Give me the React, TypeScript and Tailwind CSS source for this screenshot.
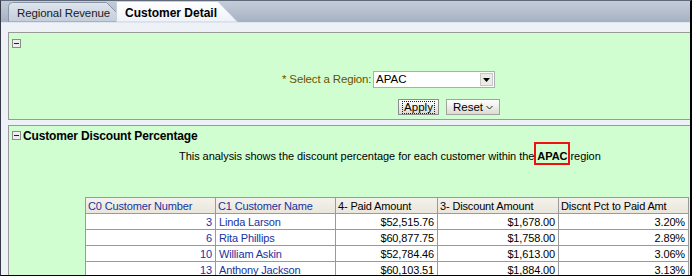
import React from "react";

const rows = [
  ["3", "Linda Larson", "$52,515.76", "$1,678.00", "3.20%"],
  ["6", "Rita Phillips", "$60,877.75", "$1,758.00", "2.89%"],
  ["10", "William Askin", "$52,784.46", "$1,613.00", "3.06%"],
  ["13", "Anthony Jackson", "$60,103.51", "$1,884.00", "3.13%"],
];

function MinusBox() {
  return (
    <div className="w-[9px] h-[9px] border border-[#8c8c8c] bg-[#eeeeee] flex items-center justify-center shrink-0">
      <div className="w-[5px] h-[1px] bg-[#222]" />
    </div>
  );
}

function InactiveTab() {
  return (
    <div className="relative w-[109px] h-[20px] shrink-0">
      <svg className="absolute inset-0" width="109" height="20" viewBox="0 0 109 20">
        <defs>
          <linearGradient id="gi" x1="0" y1="0" x2="0" y2="1">
            <stop offset="0" stopColor="#dfe5ee" />
            <stop offset="1" stopColor="#c3ccd9" />
          </linearGradient>
        </defs>
        <path d="M0.5 20 L0.5 4.5 Q0.5 0.5 4.5 0.5 L98.5 0.5 L108.5 10.5 L108.5 20 Z" fill="url(#gi)" stroke="#8a95a6" />
      </svg>
      <span className="absolute left-[9px] top-[5px] text-[11.5px] leading-[13px] text-[#1c1c1c] tracking-[-0.1px]">Regional Revenue</span>
    </div>
  );
}

function ActiveTab() {
  return (
    <div className="relative w-[122px] h-[21px] -ml-[1px] shrink-0">
      <svg className="absolute inset-0" width="122" height="21" viewBox="0 0 122 21">
        <defs>
          <linearGradient id="ga" x1="0" y1="0" x2="0" y2="1">
            <stop offset="0" stopColor="#ffffff" />
            <stop offset="1" stopColor="#eef2f8" />
          </linearGradient>
        </defs>
        <path d="M0.5 21 L0.5 0.5 L102 0.5 L121.5 21 Z" fill="url(#ga)" stroke="#c7cfdb" />
      </svg>
      <span className="absolute left-[9px] top-[6px] text-[12px] leading-[13px] font-bold text-black">Customer Detail</span>
    </div>
  );
}

export default function App() {
  return (
    <div className="w-[692px] h-[276px] overflow-hidden bg-[#eef1f6] border-t border-t-[#5f6878] border-l border-l-[#363848] border-r-2 border-r-black border-b border-b-black flex flex-col font-['Liberation_Sans',Arial,sans-serif] text-[11px] text-black">
      {/* tab strip */}
      <div className="h-[22px] shrink-0 bg-linear-to-b from-[#c4cdda] to-[#a5b1c3] flex items-end pl-[7px] border-b border-b-[#dfe5ee]">
        <InactiveTab />
        <ActiveTab />
      </div>
      <div className="h-[9px] shrink-0" />
      {/* content */}
      <div className="pl-[7px] flex flex-col">
        {/* panel 1 */}
        <div className="h-[88px] bg-[#d1fed1] border border-[#999999] border-r-0 pt-[6px] pl-[3px] flex flex-col">
          <MinusBox />
          <div className="ml-[270px] mt-[23px] w-[218px] flex flex-col">
            <div className="flex items-center gap-[5px]">
              <span className="text-[#6a5000] text-[11.5px] leading-[13px] tracking-[-0.15px] w-[86px] whitespace-nowrap">* Select a Region:</span>
              <div className="w-[122px] h-[17px] bg-white border border-[#a7aeb5] flex items-center justify-between pl-[2px] pr-[1px]">
                <span className="text-[11.5px] leading-[13px]">APAC</span>
                <div className="w-[13px] h-[13px] bg-[#ecebe6] border border-[#c9c9c4] flex items-center justify-center">
                  <svg width="7" height="4" viewBox="0 0 7 4"><path d="M0 0 L7 0 L3.5 4 Z" fill="#000" /></svg>
                </div>
              </div>
            </div>
            <div className="flex justify-end gap-[7px] mt-[11px]">
              <div className="w-[41px] h-[16px] border border-[#8d8d8d] bg-linear-to-b from-white to-[#dcdbd3] flex items-center justify-center">
                <span className="border border-dotted border-[#222] px-[1px] leading-[11px] text-[11.5px]">Apply</span>
              </div>
              <div className="w-[54px] h-[16px] border border-[#a3a39d] bg-linear-to-b from-white to-[#dcdbd3] flex items-center justify-center gap-[3px]">
                <span className="text-[11.5px] leading-[12px]">Reset</span>
                <svg width="7" height="5" viewBox="0 0 7 5"><path d="M0.5 1 L3.5 4 L6.5 1" fill="none" stroke="#222" strokeWidth="1" /></svg>
              </div>
            </div>
          </div>
        </div>
        {/* panel 2 */}
        <div className="mt-[5px] h-[200px] bg-[#d1fed1] border border-[#999999] border-r-0 border-b-0 pt-[5px] pl-[3px] flex flex-col">
          <div className="flex items-center gap-[2px] h-[9px]">
            <MinusBox />
            <span className="font-bold text-[12px] leading-[12px] tracking-[-0.15px] whitespace-nowrap">Customer Discount Percentage</span>
          </div>
          <div className="ml-[167px] mt-[2px] whitespace-nowrap text-[11px] leading-[13px] tracking-[-0.05px]">
            This analysis shows the discount percentage for each customer within the<span className="inline-block border-2 border-[#ee1111] pt-[6px] px-[1px] font-bold leading-[13px]">APAC</span>region
          </div>
          <table className="ml-[73px] mt-[32px] border-collapse table-fixed w-[603px] text-[11px] tracking-[-0.15px]">
            <colgroup>
              <col className="w-[130px]" />
              <col className="w-[120px]" />
              <col className="w-[102px]" />
              <col className="w-[121px]" />
              <col className="w-[130px]" />
            </colgroup>
            <thead>
              <tr className="bg-linear-to-b from-[#f4f2ec] to-[#e9e5da]">
                <th className="border border-[#9a9a9a] h-[16px] p-0 pl-[2px] text-left font-normal leading-[14px] text-[#1633a0]">C0 Customer Number</th>
                <th className="border border-[#9a9a9a] h-[16px] p-0 pl-[2px] text-left font-normal leading-[14px] text-[#1633a0]">C1 Customer Name</th>
                <th className="border border-[#9a9a9a] h-[16px] p-0 pl-[2px] text-left font-normal leading-[14px]">4- Paid Amount</th>
                <th className="border border-[#9a9a9a] h-[16px] p-0 pl-[2px] text-left font-normal leading-[14px]">3- Discount Amount</th>
                <th className="border border-[#9a9a9a] h-[16px] p-0 pl-[2px] text-left font-normal leading-[14px]">Discnt Pct to Paid Amt</th>
              </tr>
            </thead>
            <tbody className="bg-white">
              {rows.map((r) => (
                <tr key={r[0]}>
                  <td className="border border-[#9a9a9a] h-[16px] p-0 pr-[3px] text-right leading-[14px] text-[#1633a0]">{r[0]}</td>
                  <td className="border border-[#9a9a9a] h-[16px] p-0 pl-[3px] text-left leading-[14px] text-[#1633a0]">{r[1]}</td>
                  <td className="border border-[#9a9a9a] h-[16px] p-0 pr-[3px] text-right leading-[14px]">{r[2]}</td>
                  <td className="border border-[#9a9a9a] h-[16px] p-0 pr-[3px] text-right leading-[14px]">{r[3]}</td>
                  <td className="border border-[#9a9a9a] h-[16px] p-0 pr-[3px] text-right leading-[14px]">{r[4]}</td>
                </tr>
              ))}
            </tbody>
          </table>
        </div>
      </div>
    </div>
  );
}
